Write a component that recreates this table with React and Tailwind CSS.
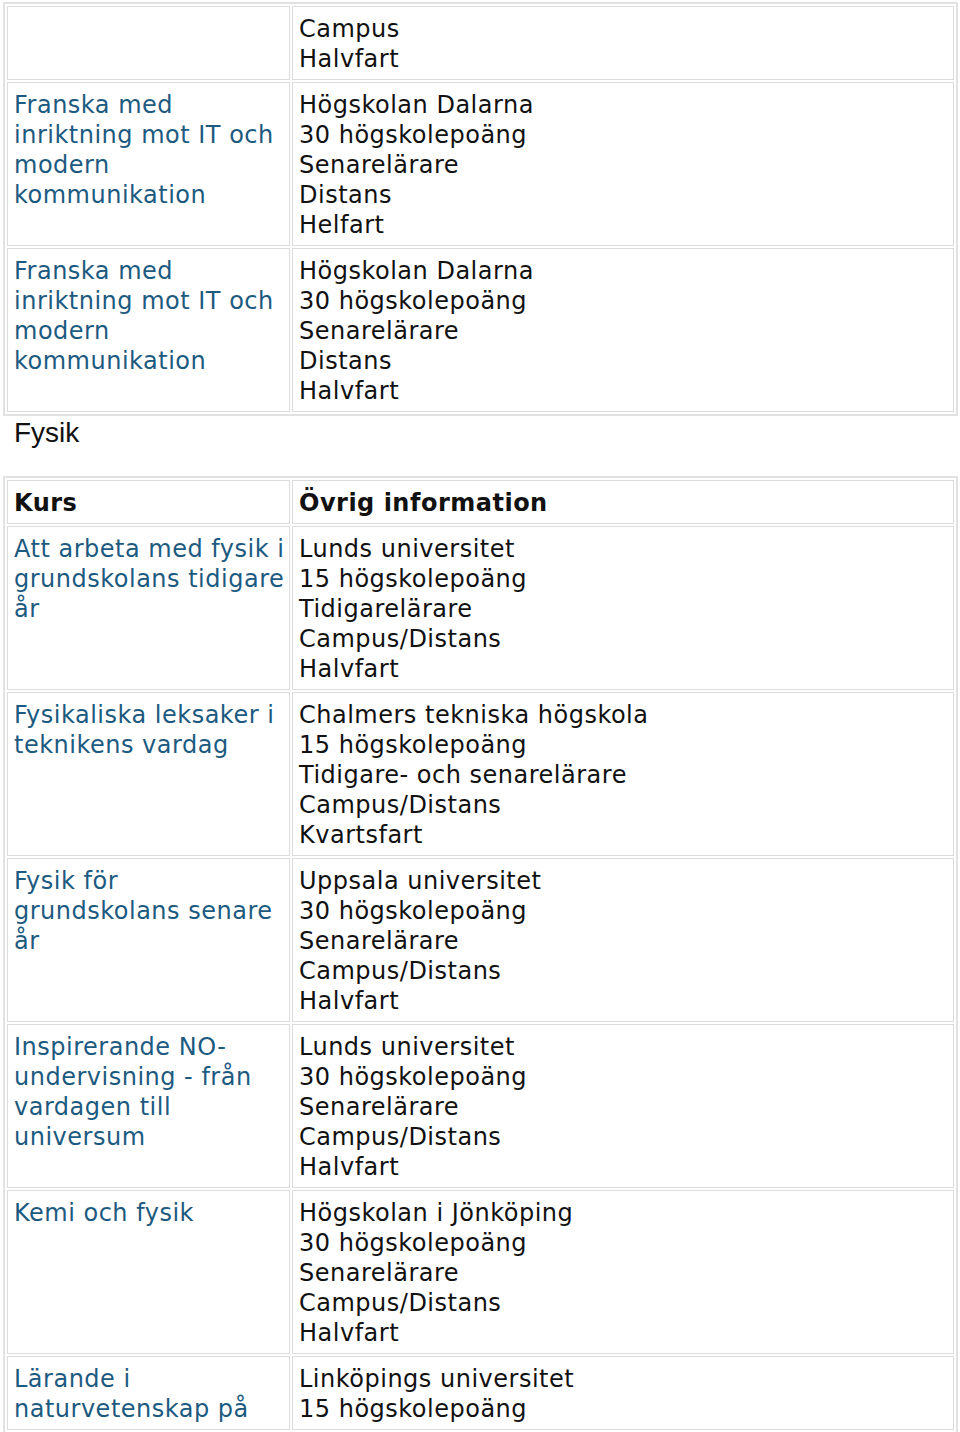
import React from "react";

const font = { fontFamily: '"DejaVu Sans", Verdana, sans-serif' };

function Lines({ lines, className = "" }) {
  return (
    <>
      {lines.map((l, i) => (
        <div key={i} className={className}>
          {l}
        </div>
      ))}
    </>
  );
}

function Row({ course, info }) {
  return (
    <>
      <div className="border border-[#dcdcdc] px-[6px] pt-[7px] pb-[5px]">
        {course && <Lines lines={course} className="text-[#1d5a7f]" />}
      </div>
      <div className="border border-[#dcdcdc] px-[6px] pt-[7px] pb-[5px]">
        <Lines lines={info} className="text-[#111]" />
      </div>
    </>
  );
}

function Table({ rows, header }) {
  return (
    <div
      className="ml-[3px] w-[955px] border-2 border-[#e2e2e2] p-[2px] grid grid-cols-[283px_1fr] gap-[2px] text-[24px] leading-[30px] tracking-[0.5px] whitespace-nowrap"
      style={font}
    >
      {header && (
        <>
          <div className="border border-[#dcdcdc] px-[6px] pt-[7px] pb-[5px] font-bold text-[#111]">Kurs</div>
          <div className="border border-[#dcdcdc] px-[6px] pt-[7px] pb-[5px] font-bold text-[#111]">
            Övrig information
          </div>
        </>
      )}
      {rows.map((r, i) => (
        <Row key={i} course={r[0]} info={r[1]} />
      ))}
    </div>
  );
}

export default function App() {
  const rows1 = [
    [null, ["Campus", "Halvfart"]],
    [
      ["Franska med", "inriktning mot IT och", "modern", "kommunikation"],
      ["Högskolan Dalarna", "30 högskolepoäng", "Senarelärare", "Distans", "Helfart"],
    ],
    [
      ["Franska med", "inriktning mot IT och", "modern", "kommunikation"],
      ["Högskolan Dalarna", "30 högskolepoäng", "Senarelärare", "Distans", "Halvfart"],
    ],
  ];
  const rows2 = [
    [
      ["Att arbeta med fysik i", "grundskolans tidigare", "år"],
      ["Lunds universitet", "15 högskolepoäng", "Tidigarelärare", "Campus/Distans", "Halvfart"],
    ],
    [
      ["Fysikaliska leksaker i", "teknikens vardag"],
      [
        "Chalmers tekniska högskola",
        "15 högskolepoäng",
        "Tidigare- och senarelärare",
        "Campus/Distans",
        "Kvartsfart",
      ],
    ],
    [
      ["Fysik för", "grundskolans senare", "år"],
      ["Uppsala universitet", "30 högskolepoäng", "Senarelärare", "Campus/Distans", "Halvfart"],
    ],
    [
      ["Inspirerande NO-", "undervisning - från", "vardagen till", "universum"],
      ["Lunds universitet", "30 högskolepoäng", "Senarelärare", "Campus/Distans", "Halvfart"],
    ],
    [
      ["Kemi och fysik"],
      ["Högskolan i Jönköping", "30 högskolepoäng", "Senarelärare", "Campus/Distans", "Halvfart"],
    ],
    [
      ["Lärande i", "naturvetenskap på"],
      ["Linköpings universitet", "15 högskolepoäng"],
    ],
  ];
  return (
    <div className="bg-white min-h-[1432px] w-[960px] pt-[2px] overflow-hidden">
      <Table rows={rows1} />
      <div
        className="pl-[14px] text-[28px] leading-[34px] text-[#111] mb-[26px]"
        style={{ fontFamily: '"Liberation Sans", Arial, sans-serif' }}
      >
        Fysik
      </div>
      <Table rows={rows2} header />
    </div>
  );
}
